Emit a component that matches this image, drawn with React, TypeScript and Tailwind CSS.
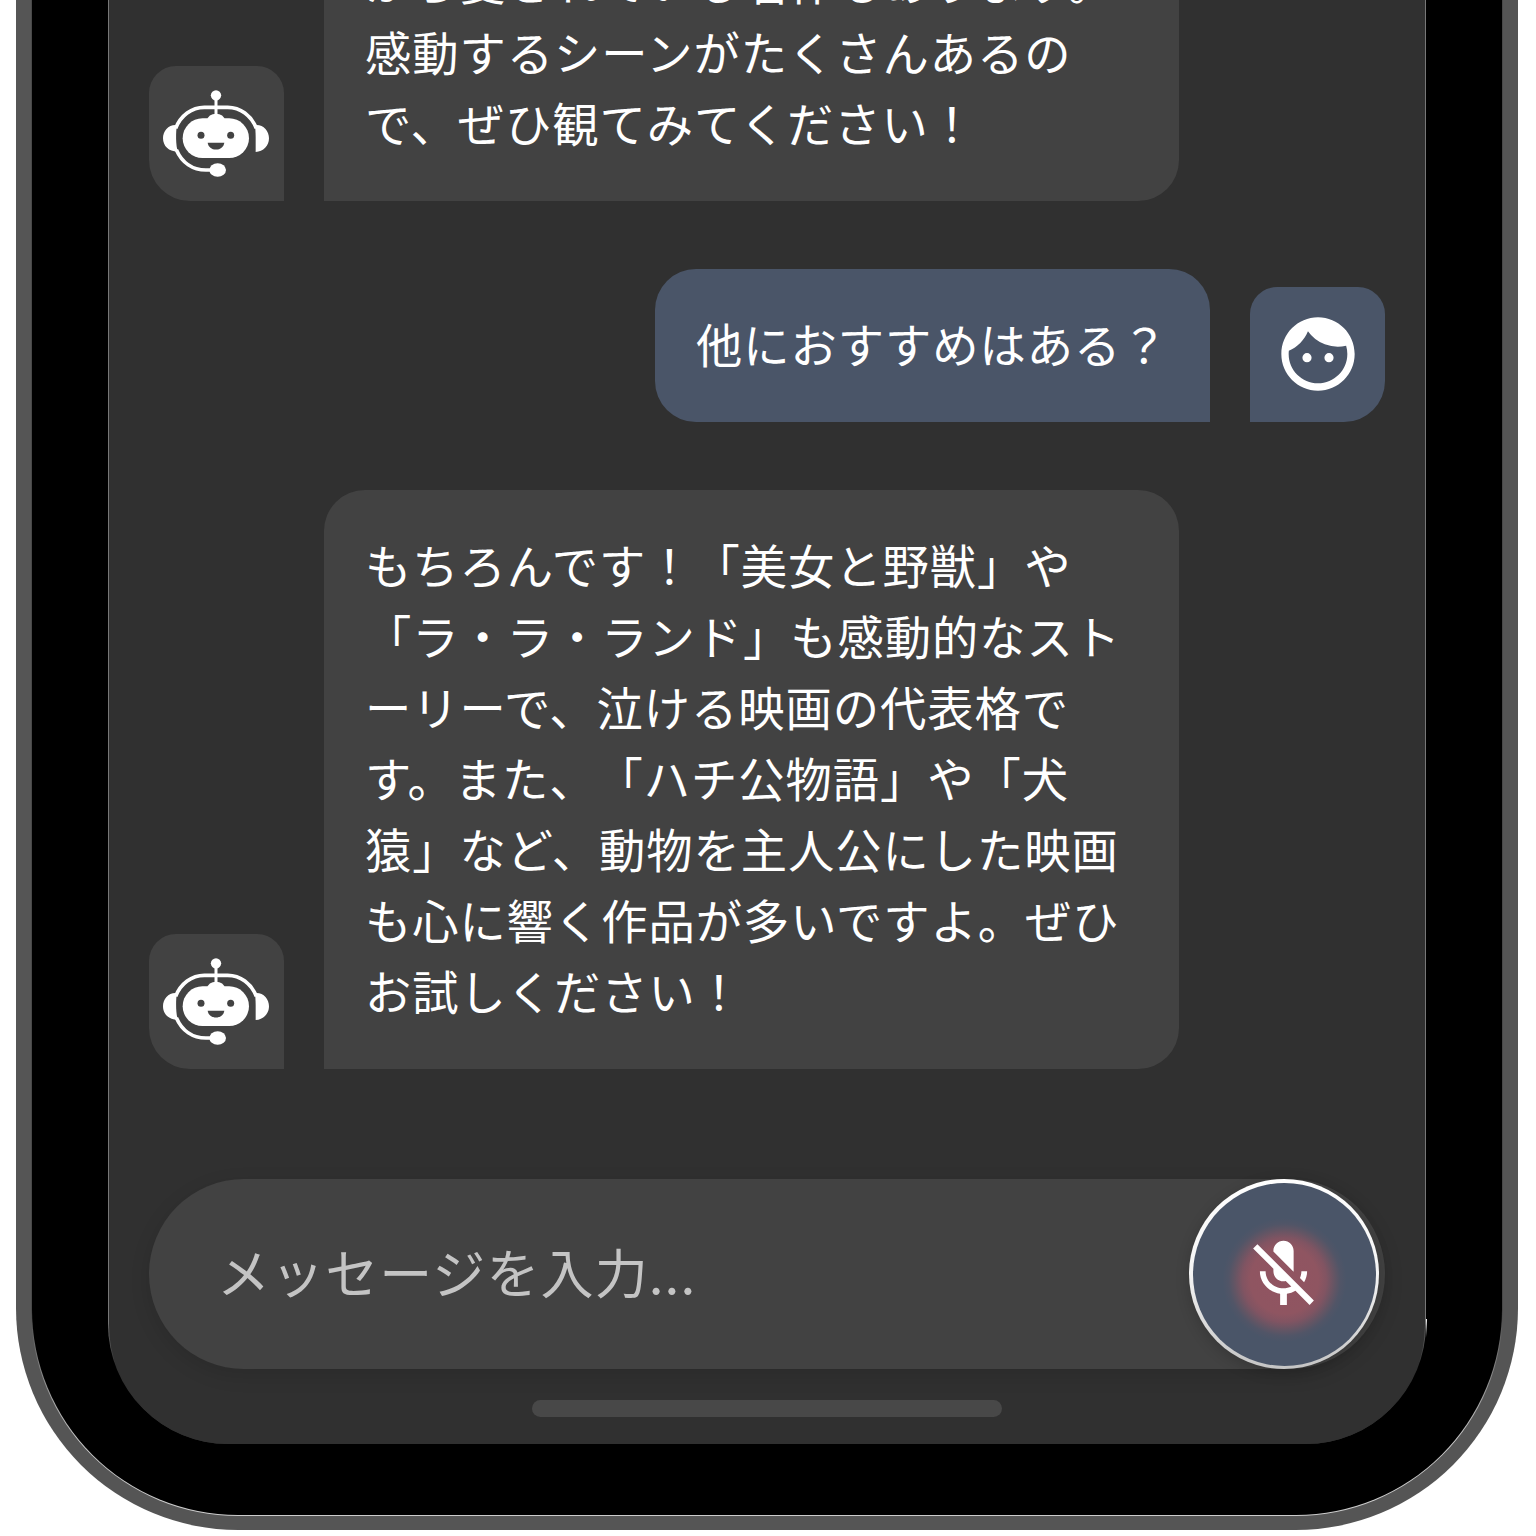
import type { ReactNode } from "react";
import { MdFace, MdMicOff } from "react-icons/md";

function RobotIcon() {
  return (
    <svg viewBox="27 49 405 405" className="size-full" fill="none">
      <g stroke="#fff" strokeWidth="11">
        <path d="M228 140V205" strokeWidth="9" />
        <path d="M215 361H198C158 361 126 339 109 300M107 236C122 198 155 173 193 173H263C301 173 334 198 349 236" />
      </g>
      <g fill="#fff">
        <circle cx="228" cy="137" r="15.5" />
        <path d="M111 226C87 223 69 243 69 266C69 290 88 307 114 306C107 290 107 245 111 226Z" />
        <path d="M345 226C369 223 387 243 387 266C387 289 370 306 347 307V262C347 248 346 238 345 226Z" />
        <rect x="128" y="206" width="199" height="119" rx="59.5" />
        <ellipse cx="228" cy="212" rx="26" ry="20" />
        <ellipse cx="233" cy="361" rx="25" ry="20.5" />
      </g>
      <g fill="#424242">
        <circle cx="183" cy="257" r="10.5" />
        <circle cx="272" cy="257" r="10.5" />
        <path d="M203 279H253C251 292 241 299.500 228 299.500S205 292 203 279Z" />
      </g>
    </svg>
  );
}

function BotMessage({ children }: { children: ReactNode }) {
  return (
    <div className="flex shrink-0 items-end gap-[40px]">
      <div className="size-[135px] shrink-0 rounded-t-[27px] rounded-bl-[41px] bg-[#424242]">
        <RobotIcon />
      </div>
      <div className="w-[855px] whitespace-pre rounded-t-[41px] rounded-br-[41px] bg-[#424242] pb-[44px] pl-[41px] pt-[38px]">
        {children}
      </div>
    </div>
  );
}

function UserMessage({ children }: { children: ReactNode }) {
  return (
    <div className="flex shrink-0 items-end justify-end gap-[40px]">
      <div className="w-[555px] whitespace-pre rounded-t-[41px] rounded-bl-[41px] bg-[#4a5568] pb-[44px] pl-[41px] pt-[38px]">
        {children}
      </div>
      <div className="flex size-[135px] shrink-0 items-center justify-center rounded-t-[27px] rounded-br-[41px] bg-[#4a5568] pb-[1px]">
        <MdFace className="size-[88px]" />
      </div>
    </div>
  );
}

const firstReply = ["から愛されている名作もあります。", "感動するシーンがたくさんあるの", "で、ぜひ観てみてください！"];

const secondReply = [
  "もちろんです！「美女と野獣」や",
  "「ラ・ラ・ランド」も感動的なスト",
  "ーリーで、泣ける映画の代表格で",
  "す。また、「ハチ公物語」や「犬",
  "猿」など、動物を主人公にした映画",
  "も心に響く作品が多いですよ。ぜひ",
  "お試しください！",
];

export default function App() {
  return (
    <div className="h-[1536px] w-[1536px] overflow-hidden bg-white pl-[16px]">
      <div className="h-[1530px] w-[1501.5px] rounded-b-[222px] bg-[#555] pb-[14px] pl-[15px] pr-[14.5px]">
        <div className="h-full rounded-b-[207px] bg-[linear-gradient(to_bottom,#484848_0,#484848_1310px,#ccc_1440px)] px-px pb-px">
          <div className="flex h-full justify-center rounded-b-[206px] bg-black">
            <div className="relative h-[1444px] w-[1318px] rounded-b-[120px] bg-[linear-gradient(to_bottom,#777_0,#777_1320px,#303030_1365px)] px-px">
              <div className="absolute -right-px top-[1319px] h-[18px] w-px bg-gradient-to-b from-white to-transparent" />
              <main className="flex h-full flex-col justify-end overflow-hidden rounded-b-[119px] bg-[#303030] px-[40px] pb-[27px] font-['Noto_Sans_CJK_JP',sans-serif] text-[46.3px] leading-[71px] tracking-[0.95px] text-white [text-spacing-trim:space-all]">
                <div className="flex flex-col gap-[68px]">
                  <BotMessage>
                    {firstReply.map((line) => (
                      <p key={line}>{line}</p>
                    ))}
                  </BotMessage>
                  <UserMessage>
                    <p>他におすすめはある？</p>
                  </UserMessage>
                  <BotMessage>
                    {secondReply.map((line) => (
                      <p key={line}>{line}</p>
                    ))}
                  </BotMessage>
                </div>
                <div className="mt-[110px] flex h-[190px] shrink-0 items-center justify-between rounded-full bg-[#424242] pl-[68px] pr-[6px] shadow-[0_6px_20px_rgba(0,0,0,0.12)]">
                  <span className="pb-[7px] text-[53px] leading-[80px] tracking-[1.1px] text-[#c4c4c4]">メッセージを入力...</span>
                  <button className="size-[190px] shrink-0 rounded-full bg-gradient-to-b from-white via-[#f4f4f4] to-[#c4c4c4] p-[3.5px] shadow-[0_4px_14px_rgba(0,0,0,0.18)]">
                    <span className="flex size-full items-center justify-center rounded-full bg-[#4a5568] bg-[radial-gradient(circle_at_50%_97px,#915461_0,#8f5561_34px,#815462_42px,#645564_50px,#515567_56px,#4a5568_62px)] pr-[1px]">
                      <MdMicOff className="size-[81px]" />
                    </span>
                  </button>
                </div>
                <div className="mt-[31px] h-[17px] w-[470px] shrink-0 self-center rounded-full bg-[#484848]" />
              </main>
            </div>
          </div>
        </div>
      </div>
    </div>
  );
}
